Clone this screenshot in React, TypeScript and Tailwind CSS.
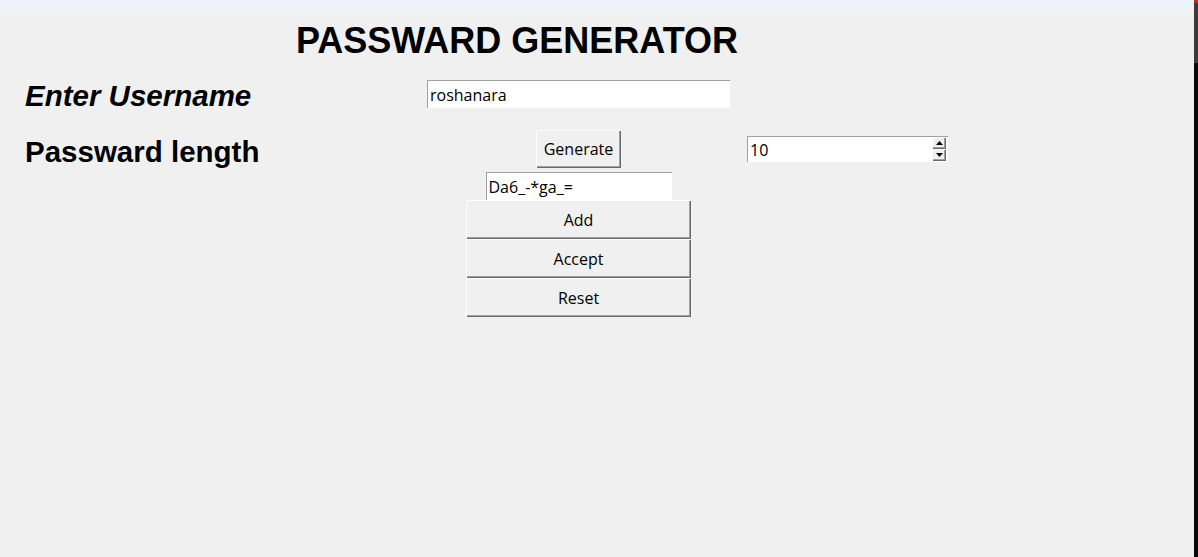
const raised =
  "bg-[#f0f0f0] shadow-[inset_1px_1px_0_#ffffff,inset_-1px_-1px_0_#696969,inset_-2px_-2px_0_#a0a0a0]";
const sunken = "bg-white shadow-[inset_1px_1px_0_#a0a0a0]";
const ui = "font-['Open_Sans',sans-serif] text-[16px] text-black";

function Entry({ value, className }: { value: string; className: string }) {
  return (
    <div className={`${sunken} ${ui} flex h-[28px] items-center pl-[3px] pt-[1px] leading-none ${className}`}>
      {value}
    </div>
  );
}

function TkButton({ label, className }: { label: string; className: string }) {
  return (
    <button className={`${raised} ${ui} flex items-center justify-center leading-none ${className}`}>
      {label}
    </button>
  );
}

function Spinbox({ value }: { value: string }) {
  return (
    <div className={`${sunken} ml-[17px] flex h-[26px] w-[201px] items-stretch`}>
      <div className={`${ui} flex flex-1 items-center pl-[3px] pt-[1px] leading-none`}>{value}</div>
      <div className="mr-[2px] flex w-[14px] flex-col py-[1px]">
        <div className={`${raised} flex flex-1 items-center justify-center`}>
          <svg width="7" height="4" viewBox="0 0 7 4">
            <path d="M3.5 0 L7 4 L0 4 Z" fill="#000" />
          </svg>
        </div>
        <div className={`${raised} flex flex-1 items-center justify-center`}>
          <svg width="7" height="4" viewBox="0 0 7 4">
            <path d="M0 0 L7 0 L3.5 4 Z" fill="#000" />
          </svg>
        </div>
      </div>
    </div>
  );
}

export default function App() {
  const label = "font-['Liberation_Sans',Arial,sans-serif] text-[29.5px] font-bold leading-[29px] text-black";

  return (
    <div className="flex h-[557px] w-[1198px] overflow-hidden bg-[#f0f0f0]">
      <div className="flex w-[1194px] shrink-0 flex-col">
        <div className="h-[12px] bg-[#eef3f9]" />
        <div className="flex flex-col pl-[25px]">
          <h1 className="mt-[11px] pl-[271px] font-['Liberation_Sans',Arial,sans-serif] text-[36px] font-bold leading-[36px] text-black">
            PASSWARD GENERATOR
          </h1>

          <div className="mt-[21px] flex items-start">
            <div className={`${label} mt-[1px] w-[402px] italic`}>Enter Username</div>
            <Entry value="roshanara" className="w-[303px]" />
          </div>

          <div className="mt-[20px] flex items-center">
            <div className={`${label} mt-[5px] w-[402px]`}>Passward length</div>
            <div className="flex w-[303px] justify-center">
              <TkButton label="Generate" className="h-[38px] w-[85px] pb-[1px]" />
            </div>
            <Spinbox value="10" />
          </div>

          <div className="mt-[4px] ml-[402px] flex w-[303px] flex-col items-center">
            <Entry value="Da6_-*ga_=" className="w-[186px]" />
            <TkButton label="Add" className="h-[39px] w-[225px]" />
            <TkButton label="Accept" className="h-[39px] w-[225px]" />
            <TkButton label="Reset" className="h-[39px] w-[225px]" />
          </div>
        </div>
      </div>
      <div className="flex w-[4px] shrink-0 flex-col bg-[#0a0a0a]">
        <div className="h-[3px] bg-[#c42b1c]" />
        <div className="h-[60px] bg-[#3b3b3b]" />
      </div>
    </div>
  );
}
